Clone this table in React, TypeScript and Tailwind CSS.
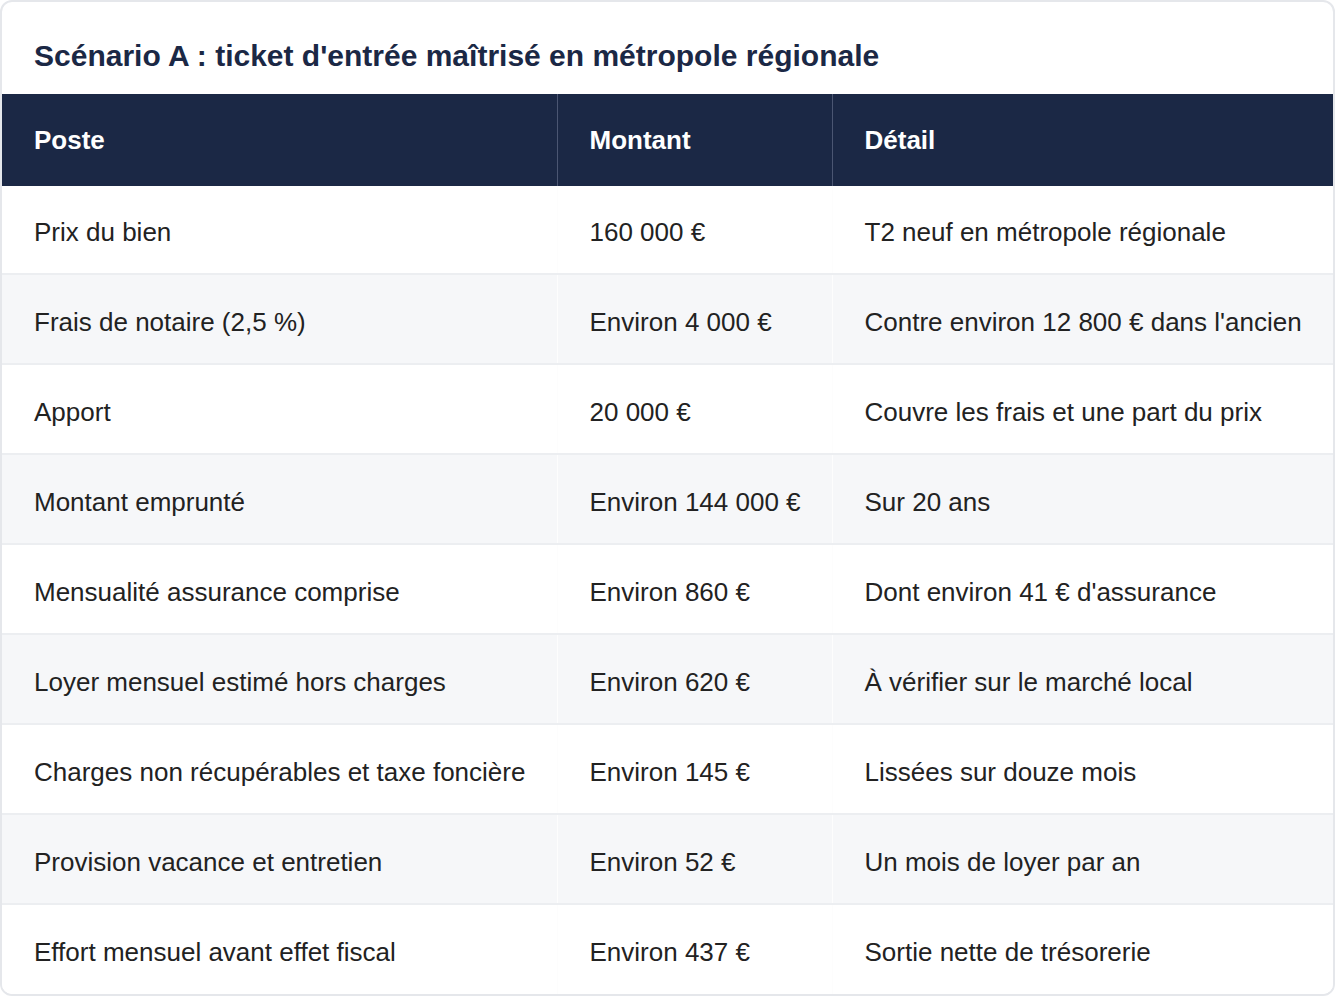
const rows = [
  ["Prix du bien", "160 000 €", "T2 neuf en métropole régionale"],
  ["Frais de notaire (2,5 %)", "Environ 4 000 €", "Contre environ 12 800 € dans l'ancien"],
  ["Apport", "20 000 €", "Couvre les frais et une part du prix"],
  ["Montant emprunté", "Environ 144 000 €", "Sur 20 ans"],
  ["Mensualité assurance comprise", "Environ 860 €", "Dont environ 41 € d'assurance"],
  ["Loyer mensuel estimé hors charges", "Environ 620 €", "À vérifier sur le marché local"],
  ["Charges non récupérables et taxe foncière", "Environ 145 €", "Lissées sur douze mois"],
  ["Provision vacance et entretien", "Environ 52 €", "Un mois de loyer par an"],
  ["Effort mensuel avant effet fiscal", "Environ 437 €", "Sortie nette de trésorerie"],
];

export default function App() {
  return (
    <div className="bg-white font-['Liberation_Sans',Arial,sans-serif]">
      <div className="w-[1335px] overflow-hidden rounded-[12px] border-2 border-[#e5e7eb] bg-white">
        <h2 className="px-8 pt-[36px] pb-[20px] text-[30px] leading-[36px] font-bold text-[#1b2845]">
          Scénario A : ticket d'entrée maîtrisé en métropole régionale
        </h2>
        <table className="w-full table-fixed border-collapse text-left">
          <colgroup>
            <col className="w-[555px]" />
            <col className="w-[275px]" />
            <col />
          </colgroup>
          <thead>
            <tr className="bg-[#1b2845] text-white">
              <th className="h-[92px] px-8 text-[26px] font-bold">Poste</th>
              <th className="h-[92px] border-l border-[#4b5672] px-8 text-[26px] font-bold">Montant</th>
              <th className="h-[92px] border-l border-[#4b5672] px-8 text-[26px] font-bold">Détail</th>
            </tr>
          </thead>
          <tbody>
            {rows.map((r, i) => (
              <tr
                key={r[0]}
                className={`${i % 2 === 1 ? "bg-[#f6f7f9]" : "bg-white"} ${i > 0 ? "border-t-2 border-[#eceef1]" : ""}`}
              >
                {r.map((c, j) => (
                  <td
                    key={j}
                    className={`${i === 0 ? "h-[88px]" : "h-[90px]"} px-8 pt-[5px] text-[26px] leading-[30px] text-[#222222] whitespace-nowrap ${j > 0 ? "border-l border-[#fdfdfd]" : ""}`}
                  >
                    {c}
                  </td>
                ))}
              </tr>
            ))}
          </tbody>
        </table>
      </div>
    </div>
  );
}
